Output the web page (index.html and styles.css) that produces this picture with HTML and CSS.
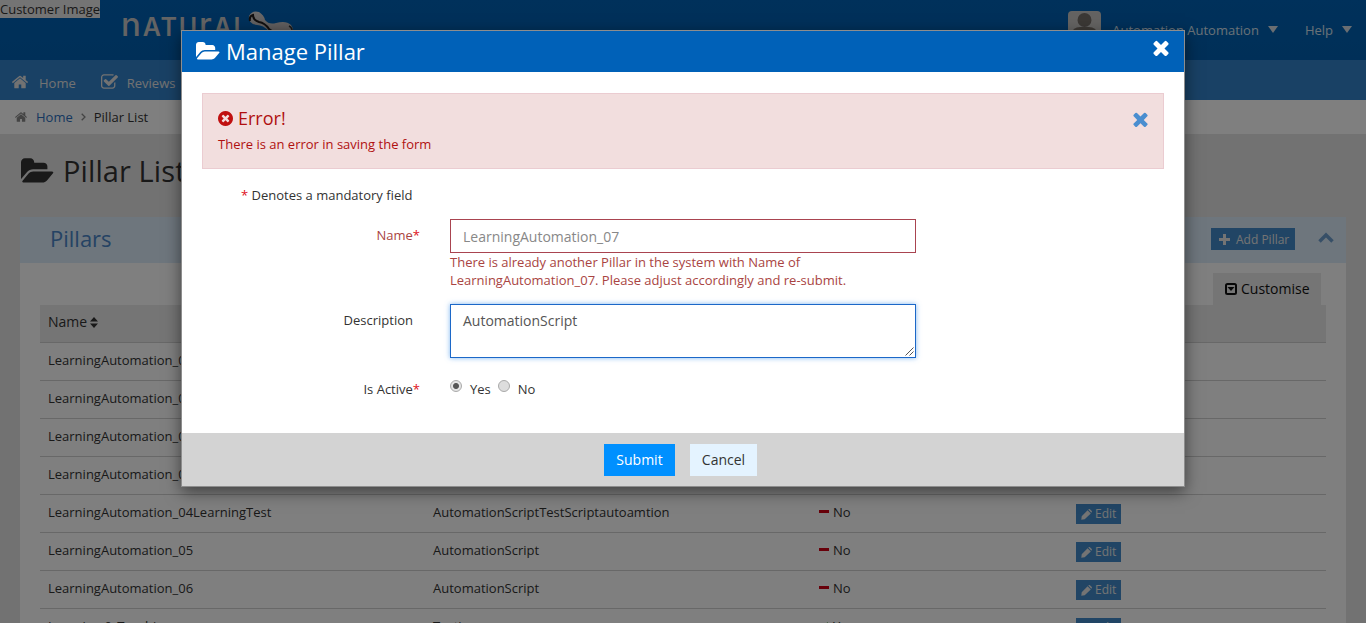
FILE: index.html
```html
<!DOCTYPE html>
<html lang="en">
<head>
<meta charset="utf-8">
<title>Pillar List</title>
<link rel="stylesheet" href="styles.css">
</head>
<body>
<svg class="sprite" aria-hidden="true">
  <symbol id="folder" viewBox="0 0 1920 1792"><path d="M1879 952q0 31-31 66l-336 396q-43 51-120.5 86.5t-143.5 35.5h-1088q-34 0-60.5-13t-26.5-43q0-31 31-66l336-396q43-51 120.5-86.5t143.5-35.5h1088q34 0 60.5 13t26.5 43zm-343-344v160h-832q-94 0-197 47.5t-164 119.5l-337 396-5 6q0-4-.5-12.5t-.5-12.5v-960q0-92 66-158t158-66h320q92 0 158 66t66 158v32h544q92 0 158 66t66 158z"/></symbol>
  <symbol id="times" viewBox="302 302 1188 1252"><path d="M1490 1322q0 40-28 68l-136 136q-28 28-68 28t-68-28l-294-294-294 294q-28 28-68 28t-68-28l-136-136q-28-28-28-68t28-68l294-294-294-294q-28-28-28-68t28-68l136-136q28-28 68-28t68 28l294 294 294-294q28-28 68-28t68 28l136 136q28 28 28 68t-28 68l-294 294 294 294q28 28 28 68z"/></symbol>
  <symbol id="home" viewBox="89 253 1614 1283"><path d="M1472 992v480q0 26-19 45t-45 19h-384v-384h-256v384h-384q-26 0-45-19t-19-45v-480q0-1 .5-3t.5-3l575-474 575 474q1 2 1 6zm223-69l-62 74q-8 9-21 11h-3q-13 0-21-7l-692-577-692 577q-12 8-24 7-13-2-21-11l-62-74q-8-10-7-23.5t11-21.5l719-599q32-26 76-26t76 26l244 204v-195q0-14 9-23t23-9h192q14 0 23 9t9 23v408l219 182q10 8 11 21.5t-7 23.5z"/></symbol>
  <symbol id="check" viewBox="64 128 1664 1408"><path d="M1472 930v318q0 119-84.5 203.5t-203.5 84.5h-832q-119 0-203.5-84.5t-84.5-203.5v-832q0-119 84.5-203.5t203.5-84.5h832q63 0 117 25 15 7 18 23 3 17-9 29l-49 49q-10 10-23 10-3 0-9-2-23-6-45-6h-832q-66 0-113 47t-47 113v832q0 66 47 113t113 47h832q66 0 113-47t47-113v-254q0-13 9-22l64-64q10-10 23-10 6 0 12 3 20 8 20 29zm231-489l-814 814q-24 24-57 24t-57-24l-430-430q-24-24-24-57t24-57l110-110q24-24 57-24t57 24l263 263 647-647q24-24 57-24t57 24l110 110q24 24 24 57t-24 57z"/></symbol>
  <symbol id="error" viewBox="128 128 1536 1536"><path d="M1277 1122q0-26-19-45l-181-181 181-181q19-19 19-45 0-27-19-46l-90-90q-19-19-46-19-26 0-45 19l-181 181-181-181q-19-19-45-19-27 0-46 19l-90 90q-19 19-19 46 0 26 19 45l181 181-181 181q-19 19-19 45 0 27 19 46l90 90q19 19 46 19 26 0 45-19l181-181 181 181q19 19 45 19 27 0 46-19l90-90q19-19 19-46zm387-226q0 209-103 385.5t-279.5 279.5-385.5 103-385.5-103-279.5-279.5-103-385.5 103-385.5 279.5-279.5 385.5-103 385.5 103 279.5 279.5 103 385.5z"/></symbol>
  <symbol id="pencil" viewBox="0 0 11 11"><path d="M6.600 1.200 9.800 4.400 3.700 10.300.3 10.800.7 7.200zM7.300.6 8 .1q.5-.2.900.1l1.900 1.900q.3.5 0 .9l-.5.8z"/></symbol>
</svg>

<div class="page">
  <header class="top">
    <div class="customer">Customer Image</div>
    <div class="logo"><span class="lc">n</span>ATU<span class="lc">r</span>AL</div>
    <svg class="bone" width="46" height="30" viewBox="0 0 46 30"><defs><linearGradient id="metal" x2="0" y2="1"><stop offset="0" stop-color="#d8d4d4"/><stop offset="1" stop-color="#a8a2a2"/></linearGradient></defs><path d="M1 5Q4-1 11 1Q16 4 17 9Q21 14 28 12Q38 9 43 14Q48 21 42 28H30L21 20Q15 14 9 14Q0 13 1 5Z" fill="url(#metal)"/><path d="M2 10Q1 5 5 4Q5 9 11 11Q17 12 21 18L27 22" fill="none" stroke="#211c1c" stroke-width="2"/><path d="M41 15Q45 17 44 22" fill="none" stroke="#333" stroke-width="1.500"/></svg>
    <div class="user">
      <svg class="avatar" width="33" height="33" viewBox="0 0 33 33"><rect width="33" height="33" rx="4" fill="#c9c7c5"/><circle cx="16.500" cy="9" r="7" fill="#77706b"/><path d="M3 33V23Q5 16 12 16H21Q28 16 30 23V33Z" fill="#77706b"/></svg>
      <span class="who">Automation Automation</span><i class="caret"></i><span class="help">Help</span><i class="caret"></i>
    </div>
  </header>
  <nav class="nav">
    <svg class="i-home"><use href="#home"/></svg><span>Home</span>
    <svg class="i-check"><use href="#check"/></svg><span>Reviews</span>
  </nav>
  <div class="crumbs">
    <svg class="i-crumb"><use href="#home"/></svg><a>Home</a>
    <svg class="i-sep" viewBox="0 0 5 8"><path d="M.7.7 4 4 .7 7.300" fill="none" stroke="currentColor" stroke-width="1.300"/></svg><span>Pillar List</span>
  </div>
  <h1 class="title"><svg class="i-title"><use href="#folder"/></svg>Pillar List</h1>
  <section class="panel">
    <div class="panel-head">
      <h2>Pillars</h2>
      <div class="add"><svg width="11" height="11" viewBox="0 0 11 11"><path d="M5.500 0V11M0 5.500H11" stroke="currentColor" stroke-width="3"/></svg>Add Pillar</div>
      <svg class="chev" width="16" height="11" viewBox="0 0 16 11"><path d="M1.500 9.500 8 3 14.500 9.500" fill="none" stroke="currentColor" stroke-width="3.500"/></svg>
    </div>
    <div class="tools"><div class="customise"><svg width="12" height="12" viewBox="0 0 12 12"><rect x="1" y="1" width="10" height="10" rx="1.500" fill="none" stroke="currentColor" stroke-width="2"/><path d="M2.500 4H9.500L6 8Z"/></svg>Customise</div></div>
    <div class="table">
      <div class="row head"><span>Name <svg class="sort" width="8" height="11" viewBox="0 0 8 11"><path d="M4 0 8 4.500H0ZM4 11 0 6.500H8Z"/></svg></span></div>
      <div class="row"><span>LearningAutomation_01</span></div>
      <div class="row"><span>LearningAutomation_02</span></div>
      <div class="row"><span>LearningAutomation_03</span></div>
      <div class="row"><span>LearningAutomation_04</span></div>
      <div class="row"><span>LearningAutomation_04LearningTest</span><span>AutomationScriptTestScriptautoamtion</span><span><i class="minus"></i>No</span><span class="act"><b class="edit"><svg width="11" height="11"><use href="#pencil"/></svg>Edit</b></span></div>
      <div class="row"><span>LearningAutomation_05</span><span>AutomationScript</span><span><i class="minus"></i>No</span><span class="act"><b class="edit"><svg width="11" height="11"><use href="#pencil"/></svg>Edit</b></span></div>
      <div class="row"><span>LearningAutomation_06</span><span>AutomationScript</span><span><i class="minus"></i>No</span><span class="act"><b class="edit"><svg width="11" height="11"><use href="#pencil"/></svg>Edit</b></span></div>
      <div class="row"><span>Learning &amp; Teaching</span><span>Testing</span><span><svg class="tick" width="11" height="9" viewBox="0 0 11 9"><path d="M1 4.500 4 7.500 10 1" fill="none" stroke="#080" stroke-width="2"/></svg>Yes</span><span class="act"><b class="edit"><svg width="11" height="11"><use href="#pencil"/></svg>Edit</b></span></div>
    </div>
  </section>
</div>

<div class="backdrop"></div>

<div class="modal">
  <div class="modal-head">
    <svg class="i-modal"><use href="#folder"/></svg><span>Manage Pillar</span>
    <svg class="close"><use href="#times"/></svg>
  </div>
  <div class="modal-body">
    <div class="alert">
      <div>
        <div class="alert-title"><svg width="15" height="15"><use href="#error"/></svg>Error!</div>
        <div class="alert-text">There is an error in saving the form</div>
      </div>
      <svg class="dismiss"><use href="#times"/></svg>
    </div>
    <div class="note"><em>*</em> Denotes a mandatory field</div>
    <div class="field name">
      <label>Name<em>*</em></label>
      <div class="control">
        <div class="input">LearningAutomation_07</div>
        <div class="msg">There is already another Pillar in the system with Name of<br>LearningAutomation_07. Please adjust accordingly and re-submit.</div>
      </div>
    </div>
    <div class="field desc">
      <label>Description</label>
      <div class="control"><div class="area">AutomationScript<svg class="grip" width="9" height="9" viewBox="0 0 9 9"><path d="M.5 8.500 8.500.5M4.500 8.500 8.500 4.500" stroke="#555"/></svg></div></div>
    </div>
    <div class="field active">
      <label>Is Active<em>*</em></label>
      <div class="control radios"><i class="radio on"></i><span>Yes</span><i class="radio"></i><span>No</span></div>
    </div>
  </div>
  <div class="modal-foot"><div class="btn submit">Submit</div><div class="btn cancel">Cancel</div></div>
</div>
</body>
</html>
```
FILE: styles.css
```css
* { box-sizing: border-box; }
html, body { height: 100%; }
body { margin: 0; overflow: hidden; font: 13px/18px "Open Sans", "Noto Sans", sans-serif; color: #333; }
svg { fill: currentColor; flex: none; }
.sprite { position: absolute; width: 0; height: 0; }
h1, h2 { margin: 0; font-weight: 400; }
i, em, b { font-style: normal; font-weight: 400; }
.page { height: 623px; overflow: hidden; background: #e5e5e5; }

.top { height: 60px; display: flex; align-items: flex-start; background: linear-gradient(#0062b6, #005fb0); }
.customer { width: 100px; height: 18px; background: #e8e8e8; white-space: nowrap; line-height: 19px; }
.logo { margin: 8px 0 0 21px; width: 121px; height: 32px; display: flex; align-items: baseline; font: 600 25px/32px Inter, sans-serif; letter-spacing: 1.8px; color: #c8c8c8; }
.logo .lc { font-size: 33px; font-weight: 500; }
.bone { margin: 11px 0 0 6px; }
.user { margin: 11px 14px 0 auto; display: flex; align-items: flex-start; color: #d5e2ee; }
.who { margin: 10px 9px 0 11px; }
.help { margin: 10px 9px 0 27px; }
.caret { margin-top: 15px; border: 5.5px solid transparent; border-top: 7px solid #d5dde4; border-bottom: 0; }

.nav { height: 40px; display: flex; align-items: center; padding: 6px 0 0 12px; background: #3282ca; color: #e4e4e4; }
.i-home { width: 16px; height: 14px; margin: -3px 11px 0 0; }
.i-check { width: 17px; height: 15px; margin: -4px 9px 0 25px; }

.crumbs { height: 34px; display: flex; align-items: center; padding-left: 15px; background: #fff; }
.crumbs a { color: #2a6fc0; }
.i-crumb { width: 12px; height: 10px; color: #888; margin-right: 9px; }
.i-sep { width: 5px; height: 8px; margin: 0 8px; color: #888; }
.title { height: 83px; padding: 0 0 9px 21px; display: flex; align-items: center; font-size: 29px; letter-spacing: .1px; }
.i-title { width: 33px; height: 31px; margin-right: 9px; }

.panel { margin: 0 20px; background: #fff; }
.panel-head { height: 46px; display: flex; align-items: center; padding: 0 12px 0 30px; background: #dcecfa; color: #4a86c8; }
.panel-head h2 { flex: 1; font-size: 22px; line-height: 28px; padding-bottom: 5px; }
.add { width: 84px; height: 22px; margin: -2px 23px 0 0; display: flex; align-items: center; gap: 6px; padding: 1px 0 0 8px; background: #428bca; color: #e8e8e8; font-size: 12px; white-space: nowrap; }
.chev { margin-top: -6px; color: #6f9fcf; }
.tools { height: 42px; display: flex; justify-content: flex-end; padding: 10px 25px 0 0; }
.customise { width: 108px; height: 32px; display: flex; align-items: center; gap: 4px; padding-left: 12px; background: #eaeaea; color: #111; font-size: 14px; }
.table { margin: 0 20px; }
.row { height: 38px; display: grid; grid-template-columns: 385px 385px 258px 258px; padding-top: 8px; border-bottom: 1px solid #d0d0d0; }
.row > span { padding-left: 8px; white-space: nowrap; }
.row.head { background: #ebebeb; font-size: 14px; }
.sort { vertical-align: -1px; margin: 0 0 0 -1px; }
.minus { display: inline-block; width: 10px; height: 3px; margin: 0 4px 4px 1px; background: #d00014; }
.tick { margin-right: 4px; }
.edit { width: 45px; height: 20px; margin-top: 1px; display: flex; align-items: center; gap: 3px; padding-left: 5px; background: #428bca; color: #e8e8e8; font-size: 12px; }

.backdrop { position: absolute; inset: 0; background: rgba(0, 0, 0, .5); }

.modal { position: absolute; left: 181px; top: 30px; width: 1004px; height: 457px; border: 1px solid #8d8d8d; background: #fff; box-shadow: 0 5px 15px rgba(0, 0, 0, .5); display: flex; flex-direction: column; }
.modal-head { height: 41px; display: flex; align-items: center; padding: 0 15px 0 14px; background: #0061b8; color: #fff; font-size: 22px; }
.i-modal { width: 24px; height: 23px; margin-right: 6px; }
.modal-head span { flex: 1; padding-bottom: 2px; }
.close { width: 16px; height: 16px; margin-top: -8px; }
.modal-body { flex: 1; padding: 21px 20px 0; }
.alert { height: 76px; display: flex; justify-content: space-between; padding: 14px 15px; border: 1px solid #ebccd1; background: #f2dede; color: #b01010; }
.alert-title { display: flex; align-items: center; gap: 5px; font-size: 18px; line-height: 20px; }
.alert-title svg { color: #c01010; }
.alert-text { margin-top: 7px; }
.dismiss { width: 15px; height: 15px; margin-top: 4px; color: #4a8ed0; }
.note { margin: 17px 0 0 39px; }
em { color: #e01020; }
.field { display: flex; }
.field label { width: 218px; text-align: right; padding-right: 7px; }
.field label:has(em) { padding-right: 0; }
.control { width: 466px; margin-left: 30px; }
.name { margin-top: 15px; }
.name label { padding-top: 7px; color: #a94442; }
.input { height: 34px; border: 1px solid #a94450; padding: 8px 12px; color: #888; font-size: 14px; }
.msg { color: #a94442; white-space: nowrap; }
.desc { margin-top: 15px; }
.desc label { padding-top: 7px; }
.area { position: relative; height: 54px; border: 1px solid #1c68c8; box-shadow: 0 0 5px rgba(70, 150, 235, .7); padding: 7px 12px; color: #555; font-size: 14px; }
.grip { position: absolute; right: 1px; bottom: 1px; }
.active { margin-top: 22px; }
.radios { display: flex; }
.radio { width: 12px; height: 12px; border: 1px solid #aaa; border-radius: 50%; background: #ddd; }
.radio.on { background: radial-gradient(circle, #555 0 2.5px, #e4e4e4 3.5px); }
.radios span { margin: 0 7px 0 8px; }
.modal-foot { height: 53px; display: flex; justify-content: center; gap: 15px; padding: 11px 5px 0 0; background: #d3d3d3; }
.btn { height: 32px; padding-top: 7px; text-align: center; font-size: 14px; }
.submit { width: 71px; background: #0090ff; color: #fff; }
.cancel { width: 67px; background: #e4f3ff; color: #333; }
```
